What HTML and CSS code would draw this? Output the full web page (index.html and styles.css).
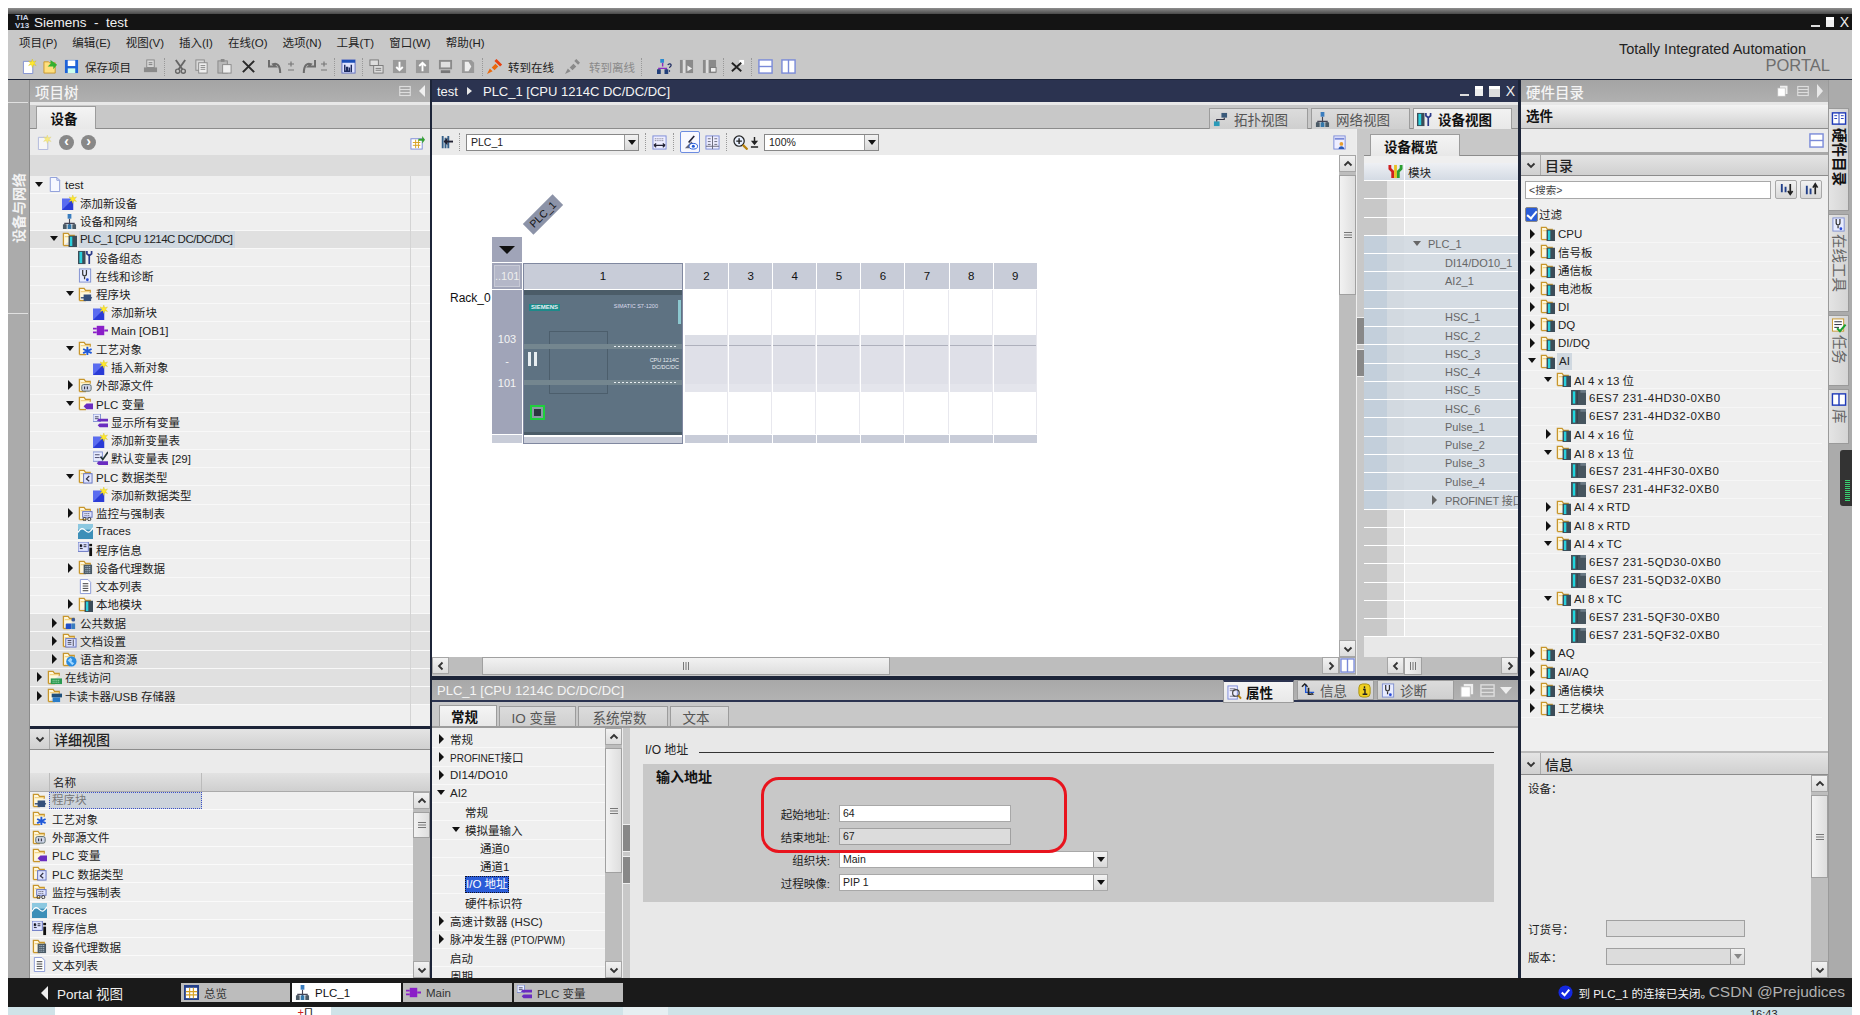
FILE: index.html
```html
<!DOCTYPE html>
<html lang="zh">
<head>
    <meta charset="UTF-8">
    <title>Siemens - test</title>
    <link rel="stylesheet" href="styles.css">
</head>
<body>
    <!-- shared icons -->
    <svg class="defs" xmlns="http://www.w3.org/2000/svg">
        <symbol id="fold" viewBox="0 0 16 16"><path d="M1.5 14.5V1.5h5l1.5 2h5v2.5" fill="#fff8dc" stroke="#c8962c" stroke-width="1.4"/><path d="M1.5 14.5h7" stroke="#c8962c" stroke-width="1.4"/><path d="M3 5h9" stroke="#eec76a"/></symbol>
        <symbol id="new" viewBox="0 0 16 16"><rect x="0" y="4" width="12" height="12" fill="#2a3bd6"/><path d="M0 16V4h12z" fill="#5a6cf0"/><path d="M11.5 0l1 3 3-1-2 2.500 2 2.500-3-1-1 3-1-3-3 1 2-2.500-2-2.500 3 1z" fill="#ffe92e" stroke="#c9b400" stroke-width=".3"/></symbol>
        <symbol id="net" viewBox="0 0 16 16"><path d="M8 5v5M3 14v-4h10v4M8 10v4" fill="none" stroke="#445" stroke-width="1.200"/><rect x="6" y="0" width="4" height="5" fill="#3a7dbf"/><rect x="1" y="11" width="4" height="5" fill="#4a5a66"/><rect x="6" y="11" width="4" height="5" fill="#37a"/><rect x="11" y="11" width="4" height="5" fill="#4a5a66"/></symbol>
        <symbol id="plc" viewBox="0 0 16 16"><use href="#fold"/><rect x="7" y="4" width="9" height="12" fill="#3c4c58"/><rect x="8.500" y="5" width="2.500" height="10" fill="#2ad0dc"/></symbol>
        <symbol id="cfg" viewBox="0 0 16 16"><rect x="0" y="1" width="8" height="14" fill="#3c4c58"/><rect x="1.500" y="2" width="3" height="12" fill="#2ad0dc"/><path d="M9.500 1v3l2.500 2 2.500-2V1M12 6v9" fill="none" stroke="#2a3a88" stroke-width="1.800"/></symbol>
        <symbol id="diag" viewBox="0 0 16 16"><rect x="1.500" y="1" width="12" height="14" fill="#e8ecff" stroke="#7f8fd0"/><path d="M5 2v4c0 3 4 3 4 0V2M7 9v3" fill="none" stroke="#333" stroke-width="1.300"/><circle cx="10" cy="12.500" r="1.500" fill="#2a4bd6"/></symbol>
        <symbol id="fb" viewBox="0 0 16 16"><use href="#fold"/><rect x="6" y="8" width="8" height="7" fill="#35507a"/><path d="M3 11.500h12" stroke="#35507a" stroke-width="1.500"/></symbol>
        <symbol id="ob" viewBox="0 0 16 16"><rect x="4" y="3" width="8" height="10" fill="#8a1ec8"/><path d="M0 6h4M0 10h4M12 8h4" stroke="#8a1ec8" stroke-width="2"/></symbol>
        <symbol id="tech" viewBox="0 0 16 16"><use href="#fold"/><path d="M10 6v9M5.500 8.500l9 4.500M5.500 13l9-4.500" stroke="#1f58d8" stroke-width="2"/></symbol>
        <symbol id="ext" viewBox="0 0 16 16"><use href="#fold"/><rect x="4" y="7" width="10" height="7" rx="2" fill="#cfd6e8" stroke="#566"/><path d="M7 9v3M10 9v3" stroke="#334" stroke-width="1.200"/></symbol>
        <symbol id="tag" viewBox="0 0 16 16"><use href="#fold"/><path d="M6 11l3-3h7v6H9z" fill="#6a2cc0"/></symbol>
        <symbol id="tags" viewBox="0 0 16 16"><rect x="0" y="0" width="8" height="8" fill="#e8ecff" stroke="#7f8fd0"/><path d="M2 3h4M2 5h4" stroke="#446"/><path d="M4 7l2-2h10v3H7zM5 12l2-2h9v4H7z" fill="#6a2cc0"/></symbol>
        <symbol id="deftag" viewBox="0 0 16 16"><rect x="0" y="1" width="10" height="10" fill="#e8ecff" stroke="#7f8fd0"/><path d="M2 4h5M2 7h5" stroke="#446"/><path d="M4 13l2-2h10v4H6z" fill="#6a2cc0"/><path d="M8 6l2.500 3L16 1" fill="none" stroke="#233" stroke-width="1.800"/></symbol>
        <symbol id="dtype" viewBox="0 0 16 16"><use href="#fold"/><rect x="6" y="5" width="9" height="10" fill="#dfe4ff" stroke="#6070c0"/><path d="M12 7.500l-3 3 3 2.500" fill="none" stroke="#334" stroke-width="1.300"/></symbol>
        <symbol id="watch" viewBox="0 0 16 16"><use href="#fold"/><rect x="5" y="6" width="10" height="6" fill="#dfe4ff" stroke="#6070c0"/><path d="M7 8h6M7 10h6" stroke="#445" stroke-dasharray="1 1"/><circle cx="7" cy="14" r="1.700" fill="none" stroke="#333"/><circle cx="12" cy="14" r="1.700" fill="none" stroke="#333"/></symbol>
        <symbol id="trace" viewBox="0 0 16 16"><rect width="16" height="16" fill="#3d8fb8"/><rect width="16" height="6" fill="#8cc8e0"/><path d="M0 9c3-5 5-5 8-2s5 2 8-3" fill="none" stroke="#fff" stroke-width="1.300"/></symbol>
        <symbol id="pinfo" viewBox="0 0 16 16"><rect x="0" y="0" width="11" height="10" fill="#dfe4ff" stroke="#6070c0"/><path d="M2 3h2v2H2M2 7h3M6 3h3M6 5h3" stroke="#223"/><rect x="12" y="6" width="3" height="9" fill="#111"/><rect x="12" y="2" width="3" height="2.500" fill="#111"/></symbol>
        <symbol id="proxy" viewBox="0 0 16 16"><use href="#fold"/><rect x="6" y="5" width="9" height="10" fill="#4a5a66"/><path d="M8 7h5M8 9h5M8 11h5M8 13h5" stroke="#cde" stroke-dasharray="1 1"/></symbol>
        <symbol id="txt" viewBox="0 0 16 16"><path d="M2.500.500h8l3 3v12h-11z" fill="#fff" stroke="#8a9ad8"/><path d="M5 5h6M5 7.500h6M5 10h6M5 12.500h6" stroke="#333"/></symbol>
        <symbol id="comm" viewBox="0 0 16 16"><use href="#fold"/><rect x="4" y="9" width="6" height="6" rx="1" fill="#2350c8"/><circle cx="12" cy="5" r="2" fill="#3a5a9a"/><path d="M10 15V9h4v6z" fill="#3a7dbf"/></symbol>
        <symbol id="docset" viewBox="0 0 16 16"><use href="#fold"/><rect x="4" y="6" width="11" height="9" fill="#dfe4ff" stroke="#6070c0"/><path d="M6 8h4M6 10h4M6 12h4M12 7v7" stroke="#445"/></symbol>
        <symbol id="lang" viewBox="0 0 16 16"><use href="#fold"/><circle cx="10" cy="10" r="5.500" fill="#2a8ce0"/><path d="M6 9l3-3 2 2-1 2 3 2-2 2-3-3z" fill="#9fd6ff"/></symbol>
        <symbol id="access" viewBox="0 0 16 16"><use href="#fold"/><rect x="4" y="9" width="12" height="6" fill="#2a9a50"/><path d="M6 11h8M6 13h8" stroke="#bfe8c8" stroke-dasharray="1 1"/></symbol>
        <symbol id="card" viewBox="0 0 16 16"><use href="#fold"/><rect x="5" y="6" width="11" height="4" fill="#20507a"/><rect x="6" y="10" width="8" height="5" fill="#2a7dc8"/></symbol>
        <symbol id="pdoc" viewBox="0 0 16 16"><path d="M3.500.500h7l3 3v12h-10z" fill="#f6f8ff" stroke="#8a9ad8"/><path d="M10.500.500v3h3" fill="none" stroke="#8a9ad8"/></symbol>
        <symbol id="mod" viewBox="0 0 16 16"><rect width="16" height="16" fill="#46555f"/><rect x="2" y="1.500" width="2.500" height="13" fill="#1fd8e0"/><rect x="6" y="1" width="1" height="14" fill="#2c3840"/><rect x="10" y="0" width="6" height="3" fill="#6a7a86"/></symbol>
        <symbol id="topo" viewBox="0 0 16 16"><rect x="1" y="10" width="6" height="5" fill="#2a9ab8"/><rect x="9" y="1" width="6" height="5" fill="#3a5a7a"/><path d="M4 10V8h8V6" fill="none" stroke="#334" stroke-width="1.200"/></symbol>
        <symbol id="save" viewBox="0 0 16 16"><path d="M1 1h14v14H1z" fill="#1e62d8"/><rect x="4" y="1.500" width="8" height="6" fill="#fff"/><rect x="4" y="10" width="8" height="5" fill="#cfe"/></symbol>
        <symbol id="tnew" viewBox="0 0 16 16"><path d="M1.500 2.500h10v13h-10z" fill="#fff" stroke="#7f8fd0"/><path d="M11 0l1 3 3-1-2 2.500 2 2.500-3-1-1 3-1-3-3 1 2-2.500-2-2.500 3 1z" fill="#ffe92e" stroke="#c9b400" stroke-width=".3"/></symbol>
        <symbol id="topen" viewBox="0 0 16 16"><path d="M1 15V3h5l1 1h6v11z" fill="#ffdf7e" stroke="#c8962c"/><path d="M8 5V1l7 5-4 5V8H5z" fill="#34b030"/></symbol>
        <symbol id="print" viewBox="0 0 16 16"><rect x="4" y="1" width="8" height="8" fill="#d8d8d8" stroke="#888"/><rect x="1" y="9" width="14" height="5" fill="#8a8a8a"/><path d="M6 4h4M6 6h4" stroke="#777"/></symbol>
        <symbol id="cut" viewBox="0 0 16 16"><path d="M3 1l7 10M13 1L6 11" stroke="#666" stroke-width="2" fill="none"/><circle cx="5" cy="13" r="2.200" fill="none" stroke="#666" stroke-width="1.500"/><circle cx="11" cy="13" r="2.200" fill="none" stroke="#666" stroke-width="1.500"/></symbol>
        <symbol id="copy" viewBox="0 0 16 16"><rect x="2" y="1" width="9" height="11" fill="#d8d8d8" stroke="#888"/><rect x="5" y="4" width="9" height="11" fill="#eee" stroke="#888"/><path d="M7 7h5M7 9h5M7 11h5" stroke="#888"/></symbol>
        <symbol id="paste" viewBox="0 0 16 16"><rect x="1" y="2" width="10" height="13" fill="#b8b8b8" stroke="#888"/><rect x="4" y="0" width="4" height="3" fill="#888"/><rect x="6" y="6" width="9" height="9" fill="#eee" stroke="#888"/></symbol>
        <symbol id="x" viewBox="0 0 16 16"><path d="M2 2l12 12M14 2L2 14" stroke="#2a2a2a" stroke-width="2.200"/></symbol>
        <symbol id="undo" viewBox="0 0 16 16"><path d="M1 1v7h7L5.500 5.500C9 4 13 6 13 15" fill="none" stroke="#6c6c6c" stroke-width="2.200"/></symbol>
        <symbol id="redo" viewBox="0 0 16 16"><path d="M15 1v7H8l2.500-2.500C7 4 3 6 3 15" fill="none" stroke="#6c6c6c" stroke-width="2.200"/></symbol>
        <symbol id="pm" viewBox="0 0 8 12"><path d="M1 3h6M4 .5v5M1 9h6" stroke="#777" stroke-width="1.200"/></symbol>
        <symbol id="compile" viewBox="0 0 16 16"><rect x="1" y="1" width="14" height="14" fill="#dfe4ff" stroke="#6070c0"/><rect x="1" y="1" width="14" height="3" fill="#1d4fb8"/><path d="M4 6v7h2V9h1v4h2V9M11 6v8" fill="none" stroke="#1d2b60" stroke-width="1.500"/></symbol>
        <symbol id="gray1" viewBox="0 0 16 16"><rect x="1" y="1" width="9" height="6" fill="#ddd" stroke="#777"/><rect x="5" y="7" width="10" height="8" fill="#ddd" stroke="#777"/><path d="M7 10h6M7 12h6" stroke="#777"/></symbol>
        <symbol id="gray2" viewBox="0 0 16 16"><rect x="1" y="1" width="14" height="14" fill="#9a9a9a"/><path d="M8 3v9M4.500 8.500L8 12l3.500-3.500" fill="none" stroke="#fff" stroke-width="2"/></symbol>
        <symbol id="gray3" viewBox="0 0 16 16"><rect x="1" y="1" width="14" height="14" fill="#9a9a9a"/><path d="M8 13V4M4.500 7.500L8 4l3.500 3.500" fill="none" stroke="#fff" stroke-width="2"/></symbol>
        <symbol id="gray4" viewBox="0 0 16 16"><rect x="1" y="1" width="14" height="10" fill="#8a8a8a"/><rect x="3" y="3" width="10" height="6" fill="#e0e0e0"/><rect x="3" y="12" width="10" height="3" fill="#777"/></symbol>
        <symbol id="gray5" viewBox="0 0 16 16"><path d="M1 1h10l3 3v11H1z" fill="#999"/><path d="M4 3h4l3 5-3 5H4z" fill="#eee"/></symbol>
        <symbol id="online" viewBox="0 0 16 16"><path d="M0 16l3-6 3 3zM5 9l4-4 3 3-4 4z" fill="#e86a10"/><path d="M9 1l6 6" stroke="#e84010" stroke-width="3"/></symbol>
        <symbol id="offline" viewBox="0 0 16 16"><path d="M0 16l3-6 3 3zM5 9l4-4 3 3-4 4z" fill="#8a8a8a"/><path d="M11 1l4 4" stroke="#8a8a8a" stroke-width="3"/></symbol>
        <symbol id="hier" viewBox="0 0 16 16"><path d="M6 4v4M2 14v-4h8v4" fill="none" stroke="#8a2cc0" stroke-width="1.500"/><rect x="3.500" y="0" width="4" height="4" fill="#2a8ad0"/><rect x="0" y="11" width="4" height="5" fill="#22407a"/><rect x="8" y="11" width="4" height="5" fill="#22407a"/><path d="M11.500 6.500c1-2 4-1.500 3.500.5-.3 1.200-1.500 1.200-1.700 2.500M13.300 12v1.500" fill="none" stroke="#1d2b60" stroke-width="1.300"/></symbol>
        <symbol id="gray6" viewBox="0 0 16 16"><rect x="1" y="1" width="14" height="14" fill="#8a8a8a"/><rect x="4" y="1" width="3" height="14" fill="#ddd"/><path d="M9 7l5 3-5 3z" fill="#eee"/></symbol>
        <symbol id="gray7" viewBox="0 0 16 16"><rect x="1" y="1" width="14" height="14" fill="#8a8a8a"/><rect x="4" y="1" width="3" height="14" fill="#ddd"/><rect x="9" y="9" width="6" height="5" fill="#eee" stroke="#777"/></symbol>
        <symbol id="crossx" viewBox="0 0 16 16"><rect x="10" y="1" width="5" height="5" fill="#fff"/><path d="M2 4l10 9M12 4L2 13" stroke="#222" stroke-width="2"/></symbol>
        <symbol id="hsplit" viewBox="0 0 16 16"><rect x="1" y="1" width="14" height="14" fill="#fff" stroke="#7a8ad8" stroke-width="1.500"/><path d="M1 8h14" stroke="#7a8ad8" stroke-width="1.500"/></symbol>
        <symbol id="vsplit" viewBox="0 0 16 16"><rect x="1" y="1" width="14" height="14" fill="#fff" stroke="#7a8ad8" stroke-width="1.500"/><path d="M8 1v14" stroke="#7a8ad8" stroke-width="1.500"/></symbol>
        <symbol id="grid" viewBox="0 0 16 16"><rect width="16" height="16" fill="#24408a"/><rect x="2" y="3" width="12" height="11" fill="#fff"/><path d="M2 7h12M2 10.500h12M6 3v11M10 3v11" stroke="#d6a020" stroke-width="1.200"/></symbol>
        <symbol id="upl" viewBox="0 0 16 16"><rect x="1" y="4" width="12" height="11" fill="#fff" stroke="#7a8ad8"/><path d="M3 8h8M3 11h8M6 5v9M9 5v9" stroke="#d6a020"/><path d="M9 4h4V1l3 4-3 4V6H9z" fill="#34a030"/></symbol>
        <symbol id="ddev" viewBox="0 0 16 16"><path d="M5 1v13M8 3v11M11 1v13" stroke="#35608a" stroke-width="2"/><path d="M16 7H7" stroke="#223" stroke-width="2"/><path d="M10 3L6 7l4 4z" fill="#223"/></symbol>
        <symbol id="rdoc" viewBox="0 0 16 16"><rect x="2" y="1" width="12" height="14" fill="#eef" stroke="#7a8ad8"/><rect x="3" y="3" width="10" height="2" fill="#7a8ad8"/><circle cx="10" cy="9.500" r="2" fill="#e8a030"/><path d="M7 15c0-4 6-4 6 0z" fill="#2a5ab8"/></symbol>
        <symbol id="zoom" viewBox="0 0 16 16"><circle cx="6.500" cy="6.500" r="5.500" fill="#e8f0ff" stroke="#222" stroke-width="1.300"/><path d="M6.500 3.500v6M3.500 6.500h6" stroke="#222" stroke-width="1.500"/><path d="M10.500 10.500l5 5" stroke="#b8820c" stroke-width="2.400"/></symbol>
        <symbol id="v1" viewBox="0 0 16 16"><rect x="1" y="1" width="14" height="14" fill="#eef" stroke="#7a8ad8"/><path d="M3 4h10M3 6h10" stroke="#667" stroke-dasharray="1 1"/><path d="M2 11h12M2 11l2.500-2M2 11l2.500 2M14 11l-2.500-2M14 11l-2.500 2" fill="none" stroke="#223" stroke-width="1.200"/></symbol>
        <symbol id="v2" viewBox="0 0 16 16"><path d="M2 14l7-7 1 1-1 6z" fill="#667"/><path d="M12 1L6 8" stroke="#223" stroke-width="1.800"/><ellipse cx="11" cy="12" rx="4.500" ry="3" fill="#fff" stroke="#1f58d8"/><circle cx="11" cy="12" r="1.600" fill="#1f58d8"/></symbol>
        <symbol id="v3" viewBox="0 0 16 16"><rect x="1" y="1" width="14" height="14" fill="#eef" stroke="#7a8ad8"/><path d="M8 1v14M3 4h3M10 4h3M3 7h3M10 7h3M3 10h3M10 10h3M1 12h14" stroke="#667"/></symbol>
        <symbol id="pload" viewBox="0 0 10 14"><path d="M1 5h8L5 10z" fill="#222"/><path d="M5 1v6M1 12h8" stroke="#222" stroke-width="1.600"/></symbol>
        <symbol id="wrench" viewBox="0 0 16 16"><path d="M2 1v4l3 3v7" fill="none" stroke="#d02020" stroke-width="3"/><path d="M8 1v14" stroke="#e8c020" stroke-width="3"/><path d="M14 1v4l-3 3v7" fill="none" stroke="#2ca030" stroke-width="3"/></symbol>
        <symbol id="sortd" viewBox="0 0 16 16"><path d="M2 2h2v9H2zM6 5h2v6H6z" fill="#22408a"/><path d="M12 2v10M9.500 9.500L12 13l2.500-3.500" fill="none" stroke="#222" stroke-width="1.800"/></symbol>
        <symbol id="sortu" viewBox="0 0 16 16"><path d="M2 4h2v9H2zM6 7h2v6H6z" fill="#22408a"/><path d="M12 13V3M9.500 6L12 2l2.500 4" fill="none" stroke="#222" stroke-width="1.800"/></symbol>
        <symbol id="insp" viewBox="0 0 16 16"><rect x="1" y="1" width="10" height="14" fill="#eef" stroke="#7a8ad8"/><path d="M3 4h6M3 6h6M3 12h6" stroke="#778"/><circle cx="9.500" cy="8.500" r="3.500" fill="none" stroke="#444" stroke-width="1.300"/><path d="M12 11l3 3.500" stroke="#b8820c" stroke-width="2"/></symbol>
        <symbol id="infoi" viewBox="0 0 16 16"><path d="M5 1v9h9" fill="none" stroke="#1f58d8" stroke-width="1.500"/><path d="M1 4l3-3 3 3" fill="none" stroke="#222" stroke-width="1.500"/><path d="M8 5v7h3" fill="none" stroke="#222" stroke-width="1.800"/><path d="M11 13v-3l3 2z" fill="#222"/></symbol>
        <symbol id="bullet" viewBox="0 0 16 16"><rect x="2" y="1" width="12" height="14" rx="4" fill="#f0d020" stroke="#a89010"/><path d="M8 3.500v2M6.500 7H8.500v5M6 12h5" fill="none" stroke="#222" stroke-width="1.500"/></symbol>
        <symbol id="win-lay" viewBox="0 0 16 16"><rect x="4" y="1" width="10" height="11" fill="#eee"/><rect x="1" y="4" width="10" height="11" fill="#fff" stroke="#bbb"/></symbol>
        <symbol id="win-list" viewBox="0 0 16 16"><rect x="1" y="2" width="14" height="12" fill="none" stroke="#ddd" stroke-width="1.500"/><path d="M1 6h14M1 10h14" stroke="#ddd" stroke-width="1.500"/></symbol>
        <symbol id="ok" viewBox="0 0 16 16"><circle cx="8" cy="8" r="7.500" fill="#1428e0"/><path d="M4 8l3 3 5-6" fill="none" stroke="#fff" stroke-width="2.200"/></symbol>
        <symbol id="book" viewBox="0 0 16 16"><rect x="1" y="2" width="14" height="12" fill="#fff" stroke="#1f3ab8" stroke-width="1.500"/><path d="M8 2v12" stroke="#1f3ab8" stroke-width="1.500"/></symbol>
        <symbol id="book2" viewBox="0 0 16 16"><rect x="1" y="2" width="14" height="12" fill="#fff" stroke="#1f3ab8" stroke-width="1.500"/><path d="M8 2v12M3 5h3M3 8h3M10 5h3M10 8h3" stroke="#1f3ab8"/></symbol>
        <symbol id="task" viewBox="0 0 16 16"><rect x="1" y="1" width="12" height="13" fill="#fff" stroke="#c8962c"/><path d="M3 4h8M3 7h8M3 10h5" stroke="#223"/><path d="M6 11l3 3 6-7" fill="none" stroke="#18a030" stroke-width="2.200"/></symbol>
        <symbol id="up" viewBox="0 0 10 10"><path d="M1.500 6.500L5 3l3.500 3.500" fill="none" stroke="#333" stroke-width="1.800"/></symbol>
        <symbol id="down" viewBox="0 0 10 10"><path d="M1.500 3.500L5 7l3.500-3.500" fill="none" stroke="#333" stroke-width="1.800"/></symbol>
        <symbol id="left" viewBox="0 0 10 10"><path d="M6.500 1.500L3 5l3.500 3.500" fill="none" stroke="#333" stroke-width="1.800"/></symbol>
        <symbol id="right" viewBox="0 0 10 10"><path d="M3.500 1.500L7 5 3.500 8.500" fill="none" stroke="#333" stroke-width="1.800"/></symbol>
        <symbol id="gripv" viewBox="0 0 10 10"><path d="M1 2.500h8M1 5h8M1 7.500h8" stroke="#777"/></symbol>
        <symbol id="griph" viewBox="0 0 10 10"><path d="M2.500 1v8M5 1v8M7.500 1v8" stroke="#777"/></symbol>
    </svg>

    <div class="window">
        <div class="titlebar">
            <span class="tia">TIA<br>V13</span>
            <span class="title-text">Siemens &nbsp;-&nbsp; test</span>
            <span class="win-btns"><i class="wb-min"></i><i class="wb-rest"></i><b>X</b></span>
        </div>

        <div class="mainbar">
            <div class="menus">
                <span>项目(P)</span><span>编辑(E)</span><span>视图(V)</span><span>插入(I)</span><span>在线(O)</span><span>选项(N)</span><span>工具(T)</span><span>窗口(W)</span><span>帮助(H)</span>
            </div>
            <div class="toolbar">
                <svg class="ti"><use href="#tnew"/></svg>
                <svg class="ti"><use href="#topen"/></svg>
                <svg class="ti"><use href="#save"/></svg>
                <span class="tb-text save-text">保存项目</span>
                <svg class="ti"><use href="#print"/></svg>
                <i class="sep"></i>
                <svg class="ti ml2"><use href="#cut"/></svg>
                <svg class="ti"><use href="#copy"/></svg>
                <svg class="ti ml2"><use href="#paste"/></svg>
                <svg class="ti ml3"><use href="#x"/></svg>
                <svg class="ti ml6"><use href="#undo"/></svg>
                <svg class="pm"><use href="#pm"/></svg>
                <svg class="ti"><use href="#redo"/></svg>
                <svg class="pm"><use href="#pm"/></svg>
                <i class="sep"></i>
                <svg class="ti"><use href="#compile"/></svg>
                <i class="sep"></i>
                <svg class="ti"><use href="#gray1"/></svg>
                <svg class="ti ml2"><use href="#gray2"/></svg>
                <svg class="ti ml2"><use href="#gray3"/></svg>
                <svg class="ti ml2"><use href="#gray4"/></svg>
                <svg class="ti ml2"><use href="#gray5"/></svg>
                <i class="sep"></i>
                <svg class="ti back2"><use href="#online"/></svg>
                <span class="tb-text on-text">转到在线</span>
                <svg class="ti"><use href="#offline"/></svg>
                <span class="tb-text off">转到离线</span>
                <i class="sep"></i>
                <svg class="ti ml9"><use href="#hier"/></svg>
                <svg class="ti ml1"><use href="#gray6"/></svg>
                <svg class="ti ml2"><use href="#gray7"/></svg>
                <i class="sep"></i>
                <svg class="ti"><use href="#crossx"/></svg>
                <i class="sep"></i>
                <svg class="ti"><use href="#hsplit"/></svg>
                <svg class="ti ml2"><use href="#vsplit"/></svg>
            </div>
            <div class="brand">
                <div class="brand-1">Totally Integrated Automation</div>
                <div class="brand-2">PORTAL</div>
            </div>
        </div>

        <div class="work">
            <div class="side-left">
                <div class="side-tab">设备与网络</div>
            </div>

            <div class="col-project">
                <div class="pane-head">
                    <span>项目树</span>
                    <span class="head-icons"><svg class="hi"><use href="#win-list"/></svg><i class="tri-l"></i></span>
                </div>
                <div class="tabrow"><div class="tab on">设备</div></div>
                <div class="subtools">
                    <svg class="ti dim"><use href="#tnew"/></svg>
                    <i class="round-btn">‹</i>
                    <i class="round-btn">›</i>
                    <svg class="ti push-r"><use href="#upl"/></svg>
                </div>
                <div class="grey-band"></div>
                <div class="tree">
                    <div class="row l0"><i class="tw o"></i><svg class="ic"><use href="#pdoc"/></svg><span>test</span></div>
                    <div class="row l1"><i class="tw"></i><svg class="ic"><use href="#new"/></svg><span>添加新设备</span></div>
                    <div class="row l1"><i class="tw"></i><svg class="ic"><use href="#net"/></svg><span>设备和网络</span></div>
                    <div class="row d l1"><i class="tw o"></i><svg class="ic"><use href="#plc"/></svg><span class="sel">PLC_1 [CPU 1214C DC/DC/DC]</span></div>
                    <div class="row l2"><i class="tw"></i><svg class="ic"><use href="#cfg"/></svg><span>设备组态</span></div>
                    <div class="row l2"><i class="tw"></i><svg class="ic"><use href="#diag"/></svg><span>在线和诊断</span></div>
                    <div class="row l2"><i class="tw o"></i><svg class="ic"><use href="#fb"/></svg><span>程序块</span></div>
                    <div class="row l3"><i class="tw"></i><svg class="ic"><use href="#new"/></svg><span>添加新块</span></div>
                    <div class="row l3"><i class="tw"></i><svg class="ic"><use href="#ob"/></svg><span>Main [OB1]</span></div>
                    <div class="row l2"><i class="tw o"></i><svg class="ic"><use href="#tech"/></svg><span>工艺对象</span></div>
                    <div class="row l3"><i class="tw"></i><svg class="ic"><use href="#new"/></svg><span>插入新对象</span></div>
                    <div class="row l2"><i class="tw c"></i><svg class="ic"><use href="#ext"/></svg><span>外部源文件</span></div>
                    <div class="row l2"><i class="tw o"></i><svg class="ic"><use href="#tag"/></svg><span>PLC 变量</span></div>
                    <div class="row l3"><i class="tw"></i><svg class="ic"><use href="#tags"/></svg><span>显示所有变量</span></div>
                    <div class="row l3"><i class="tw"></i><svg class="ic"><use href="#new"/></svg><span>添加新变量表</span></div>
                    <div class="row l3"><i class="tw"></i><svg class="ic"><use href="#deftag"/></svg><span>默认变量表 [29]</span></div>
                    <div class="row l2"><i class="tw o"></i><svg class="ic"><use href="#dtype"/></svg><span>PLC 数据类型</span></div>
                    <div class="row l3"><i class="tw"></i><svg class="ic"><use href="#new"/></svg><span>添加新数据类型</span></div>
                    <div class="row l2"><i class="tw c"></i><svg class="ic"><use href="#watch"/></svg><span>监控与强制表</span></div>
                    <div class="row l2"><i class="tw"></i><svg class="ic"><use href="#trace"/></svg><span>Traces</span></div>
                    <div class="row l2"><i class="tw"></i><svg class="ic"><use href="#pinfo"/></svg><span>程序信息</span></div>
                    <div class="row l2"><i class="tw c"></i><svg class="ic"><use href="#proxy"/></svg><span>设备代理数据</span></div>
                    <div class="row l2"><i class="tw"></i><svg class="ic"><use href="#txt"/></svg><span>文本列表</span></div>
                    <div class="row l2"><i class="tw c"></i><svg class="ic"><use href="#plc"/></svg><span>本地模块</span></div>
                    <div class="row d l1"><i class="tw c"></i><svg class="ic"><use href="#comm"/></svg><span>公共数据</span></div>
                    <div class="row d l1"><i class="tw c"></i><svg class="ic"><use href="#docset"/></svg><span>文档设置</span></div>
                    <div class="row d l1"><i class="tw c"></i><svg class="ic"><use href="#lang"/></svg><span>语言和资源</span></div>
                    <div class="row d l0"><i class="tw c"></i><svg class="ic"><use href="#access"/></svg><span>在线访问</span></div>
                    <div class="row d l0"><i class="tw c"></i><svg class="ic"><use href="#card"/></svg><span>卡读卡器/USB 存储器</span></div>
                </div>
                <div class="dark-h"></div>
                <div class="section-head">
                    <span class="collapse"><svg class="sb"><use href="#down"/></svg></span>
                    <span>详细视图</span>
                </div>
                <div class="detail-band"></div>
                <div class="detail-cols"><span class="dc-name">名称</span><span class="dc-rest"></span></div>
                <div class="detail-body">
                    <div class="detail-rows">
                        <div class="drow sel-row"><svg class="ic"><use href="#fb"/></svg><span>程序块</span></div>
                        <div class="drow"><svg class="ic"><use href="#tech"/></svg><span>工艺对象</span></div>
                        <div class="drow"><svg class="ic"><use href="#ext"/></svg><span>外部源文件</span></div>
                        <div class="drow"><svg class="ic"><use href="#tag"/></svg><span>PLC 变量</span></div>
                        <div class="drow"><svg class="ic"><use href="#dtype"/></svg><span>PLC 数据类型</span></div>
                        <div class="drow"><svg class="ic"><use href="#watch"/></svg><span>监控与强制表</span></div>
                        <div class="drow"><svg class="ic"><use href="#trace"/></svg><span>Traces</span></div>
                        <div class="drow"><svg class="ic"><use href="#pinfo"/></svg><span>程序信息</span></div>
                        <div class="drow"><svg class="ic"><use href="#proxy"/></svg><span>设备代理数据</span></div>
                        <div class="drow"><svg class="ic"><use href="#txt"/></svg><span>文本列表</span></div>
                    </div>
                    <div class="vsb">
                        <span class="sb-btn"><svg class="sb"><use href="#up"/></svg></span>
                        <span class="sb-thumb d-thumb"><svg class="sb"><use href="#gripv"/></svg></span>
                        <span class="sb-track"></span>
                        <span class="sb-btn"><svg class="sb"><use href="#down"/></svg></span>
                    </div>
                </div>
            </div>

            <div class="dark-v"></div>

            <div class="col-center">
                <div class="editor">
                    <div class="ed-head">
                        <span>test</span><i class="tri-r"></i><span>PLC_1 [CPU 1214C DC/DC/DC]</span>
                        <span class="win-btns"><i class="wb-min"></i><i class="wb-rest"></i><i class="wb-max"></i><b>X</b></span>
                    </div>
                    <div class="ed-tabs">
                        <div class="vtab"><svg class="ic"><use href="#topo"/></svg>拓扑视图</div>
                        <div class="vtab"><svg class="ic"><use href="#net"/></svg>网络视图</div>
                        <div class="vtab on"><svg class="ic"><use href="#cfg"/></svg>设备视图</div>
                    </div>
                    <div class="ed-body">
                        <div class="ed-main">
                            <div class="ed-tools">
                                <svg class="ti"><use href="#ddev"/></svg>
                                <i class="sep"></i>
                                <span class="combo w-plc"><span>PLC_1</span><i class="dd"></i></span>
                                <i class="sep"></i>
                                <svg class="ti"><use href="#v1"/></svg>
                                <i class="sep"></i>
                                <span class="toggled"><svg class="ti"><use href="#v2"/></svg></span>
                                <svg class="ti"><use href="#v3"/></svg>
                                <i class="sep"></i>
                                <svg class="ti"><use href="#zoom"/></svg>
                                <svg class="pl"><use href="#pload"/></svg>
                                <span class="combo w-zoom"><span>100%</span><i class="dd"></i></span>
                                <svg class="ti push-r"><use href="#rdoc"/></svg>
                            </div>
                            <div class="canvas-wrap">
                                <div class="canvas">
                                    <div class="rack-name">Rack_0</div>
                                    <div class="plc-flag">PLC_1</div>
                                    <div class="rack-toggle"><i></i></div>
                                    <div class="rack">
                                        <div class="rack-left">
                                            <div class="rl-head"><span>..101</span></div>
                                            <div class="rl-body"><span>103</span><span>-</span><span>101</span></div>
                                            <div class="rl-foot"></div>
                                        </div>
                                        <div class="slot cpu-slot">
                                            <div class="slot-h">1</div>
                                            <div class="cpu">
                                                <span class="cpu-logo">SIEMENS</span>
                                                <span class="cpu-name">SIMATIC S7-1200</span>
                                                <i class="cpu-led"></i>
                                                <i class="cpu-door"></i>
                                                <i class="cpu-strip s1"></i>
                                                <i class="cpu-strip s2"></i>
                                                <span class="cpu-leds"><i></i><i></i></span>
                                                <span class="cpu-type">CPU 1214C<br>DC/DC/DC</span>
                                                <span class="cpu-port"><i></i></span>
                                            </div>
                                            <div class="slot-f"></div>
                                        </div>
                                        <div class="slot"><div class="slot-h">2</div><div class="slot-b"></div><div class="slot-f"></div></div>
                                        <div class="slot"><div class="slot-h">3</div><div class="slot-b"></div><div class="slot-f"></div></div>
                                        <div class="slot"><div class="slot-h">4</div><div class="slot-b"></div><div class="slot-f"></div></div>
                                        <div class="slot"><div class="slot-h">5</div><div class="slot-b"></div><div class="slot-f"></div></div>
                                        <div class="slot"><div class="slot-h">6</div><div class="slot-b"></div><div class="slot-f"></div></div>
                                        <div class="slot"><div class="slot-h">7</div><div class="slot-b"></div><div class="slot-f"></div></div>
                                        <div class="slot"><div class="slot-h">8</div><div class="slot-b"></div><div class="slot-f"></div></div>
                                        <div class="slot"><div class="slot-h">9</div><div class="slot-b"></div><div class="slot-f"></div></div>
                                    </div>
                                </div>
                                <div class="vsb">
                                    <span class="sb-btn"><svg class="sb"><use href="#up"/></svg></span>
                                    <span class="sb-thumb canvas-thumb"><svg class="sb"><use href="#gripv"/></svg></span>
                                    <span class="sb-track"></span>
                                    <span class="sb-btn"><svg class="sb"><use href="#down"/></svg></span>
                                </div>
                            </div>
                            <div class="hsb">
                                <span class="sb-btn"><svg class="sb"><use href="#left"/></svg></span>
                                <span class="hsb-gap"></span>
                                <span class="sb-thumb h-thumb"><svg class="sb"><use href="#griph"/></svg></span>
                                <span class="sb-track"></span>
                                <span class="sb-btn"><svg class="sb"><use href="#right"/></svg></span>
                                <span class="sb-btn box"><svg class="ic"><use href="#vsplit"/></svg></span>
                            </div>
                        </div>
                        <div class="overview">
                            <div class="ov-strip"><i class="grab"></i><i class="grab"></i></div>
                            <div class="ov-main">
                                <div class="ov-tabrow"><div class="tab on">设备概览</div></div>
                                <div class="ov-head"><span class="c1"></span><span class="c2"><svg class="ic"><use href="#wrench"/></svg></span><span class="c3">模块</span></div>
                                <div class="ov-row"><span class="c1"></span><span class="c2"></span><span class="c3"></span></div>
                                <div class="ov-row"><span class="c1"></span><span class="c2"></span><span class="c3"></span></div>
                                <div class="ov-row"><span class="c1"></span><span class="c2"></span><span class="c3"></span></div>
                                <div class="ov-row hl"><span class="c1"></span><span class="c2"></span><span class="c3 i1"><i class="tw o mini"></i>PLC_1</span></div>
                                <div class="ov-row hl"><span class="c1"></span><span class="c2"></span><span class="c3 i2">DI14/DO10_1</span></div>
                                <div class="ov-row hl"><span class="c1"></span><span class="c2"></span><span class="c3 i2">AI2_1</span></div>
                                <div class="ov-row hl"><span class="c1"></span><span class="c2"></span><span class="c3"></span></div>
                                <div class="ov-row hl"><span class="c1"></span><span class="c2"></span><span class="c3 i2">HSC_1</span></div>
                                <div class="ov-row hl"><span class="c1"></span><span class="c2"></span><span class="c3 i2">HSC_2</span></div>
                                <div class="ov-row hl"><span class="c1"></span><span class="c2"></span><span class="c3 i2">HSC_3</span></div>
                                <div class="ov-row hl"><span class="c1"></span><span class="c2"></span><span class="c3 i2">HSC_4</span></div>
                                <div class="ov-row hl"><span class="c1"></span><span class="c2"></span><span class="c3 i2">HSC_5</span></div>
                                <div class="ov-row hl"><span class="c1"></span><span class="c2"></span><span class="c3 i2">HSC_6</span></div>
                                <div class="ov-row hl"><span class="c1"></span><span class="c2"></span><span class="c3 i2">Pulse_1</span></div>
                                <div class="ov-row hl"><span class="c1"></span><span class="c2"></span><span class="c3 i2">Pulse_2</span></div>
                                <div class="ov-row hl"><span class="c1"></span><span class="c2"></span><span class="c3 i2">Pulse_3</span></div>
                                <div class="ov-row hl"><span class="c1"></span><span class="c2"></span><span class="c3 i2">Pulse_4</span></div>
                                <div class="ov-row hl"><span class="c1"></span><span class="c2"></span><span class="c3 i1b"><i class="tw c mini"></i><span class="pn">PROFINET 接口</span></span></div>
                                <div class="ov-row"><span class="c1"></span><span class="c2"></span><span class="c3"></span></div>
                                <div class="ov-row"><span class="c1"></span><span class="c2"></span><span class="c3"></span></div>
                                <div class="ov-row"><span class="c1"></span><span class="c2"></span><span class="c3"></span></div>
                                <div class="ov-row"><span class="c1"></span><span class="c2"></span><span class="c3"></span></div>
                                <div class="ov-row"><span class="c1"></span><span class="c2"></span><span class="c3"></span></div>
                                <div class="ov-row"><span class="c1"></span><span class="c2"></span><span class="c3"></span></div>
                                <div class="ov-row"><span class="c1"></span><span class="c2"></span><span class="c3"></span></div>
                                <div class="ov-fill"></div>
                                <div class="ov-hsb">
                                    <span class="ov-hsb-l"></span>
                                    <span class="sb-btn"><svg class="sb"><use href="#left"/></svg></span>
                                    <span class="sb-thumb ov-thumb"><svg class="sb"><use href="#griph"/></svg></span>
                                    <span class="sb-track"></span>
                                    <span class="sb-btn"><svg class="sb"><use href="#right"/></svg></span>
                                </div>
                            </div>
                        </div>
                    </div>
                </div>

                <div class="dark-h thick"></div>

                <div class="inspector">
                    <div class="insp-head">
                        <span class="insp-title">PLC_1 [CPU 1214C DC/DC/DC]</span>
                        <div class="insp-tabs">
                            <div class="itab on"><svg class="ic"><use href="#insp"/></svg>属性</div>
                            <div class="itab"><svg class="ic"><use href="#infoi"/></svg>信息<svg class="ic end"><use href="#bullet"/></svg></div>
                            <div class="itab"><svg class="ic"><use href="#diag"/></svg>诊断</div>
                        </div>
                        <span class="insp-icons"><svg class="ic"><use href="#win-lay"/></svg><svg class="ic"><use href="#win-list"/></svg><i class="tri-d"></i></span>
                    </div>
                    <div class="tabrow insp-tabrow">
                        <div class="tab big on">常规</div>
                        <div class="tab big t2">IO 变量</div>
                        <div class="tab big t3">系统常数</div>
                        <div class="tab big t4">文本</div>
                    </div>
                    <div class="insp-body">
                        <div class="nav">
                            <div class="nrow n0"><i class="tw c"></i><span>常规</span></div>
                            <div class="nrow n0"><i class="tw c"></i><span><small>PROFINET</small>接口</span></div>
                            <div class="nrow n0"><i class="tw c"></i><span>DI14/DO10</span></div>
                            <div class="nrow n0"><i class="tw o"></i><span>AI2</span></div>
                            <div class="nrow n1"><i class="tw"></i><span>常规</span></div>
                            <div class="nrow n1"><i class="tw o"></i><span>模拟量输入</span></div>
                            <div class="nrow n2"><i class="tw"></i><span>通道0</span></div>
                            <div class="nrow n2"><i class="tw"></i><span>通道1</span></div>
                            <div class="nrow n1"><i class="tw"></i><span class="cur">I/O 地址</span></div>
                            <div class="nrow n1"><i class="tw"></i><span>硬件标识符</span></div>
                            <div class="nrow n0"><i class="tw c"></i><span>高速计数器 (HSC)</span></div>
                            <div class="nrow n0"><i class="tw c"></i><span>脉冲发生器 <small>(PTO/PWM)</small></span></div>
                            <div class="nrow n0"><i class="tw"></i><span>启动</span></div>
                            <div class="nrow n0"><i class="tw"></i><span>周期</span></div>
                        </div>
                        <div class="vsb">
                            <span class="sb-btn"><svg class="sb"><use href="#up"/></svg></span>
                            <span class="sb-thumb nav-thumb"><svg class="sb"><use href="#gripv"/></svg></span>
                            <span class="sb-track"></span>
                            <span class="sb-btn"><svg class="sb"><use href="#down"/></svg></span>
                        </div>
                        <div class="nav-strip"><i class="grab"></i><i class="grab"></i></div>
                        <div class="props">
                            <div class="props-title"><span>I/O 地址</span><i></i></div>
                            <div class="props-block">
                                <h3>输入地址</h3>
                                <div class="frow first"><label>起始地址:</label><span class="inp">64</span></div>
                                <div class="frow"><label>结束地址:</label><span class="inp ro">67</span></div>
                                <div class="frow"><label>组织块:</label><span class="inp wide sel-inp"><span>Main</span><i class="dd"></i></span></div>
                                <div class="frow"><label>过程映像:</label><span class="inp wide sel-inp"><span>PIP 1</span><i class="dd"></i></span></div>
                                <div class="red-mark"></div>
                            </div>
                        </div>
                    </div>
                </div>
            </div>

            <div class="dark-v wide"></div>

            <div class="col-catalog">
                <div class="pane-head">
                    <span>硬件目录</span>
                    <span class="head-icons"><svg class="hi"><use href="#win-lay"/></svg><svg class="hi"><use href="#win-list"/></svg><i class="tri-r big"></i></span>
                </div>
                <div class="cat-sub">选件</div>
                <div class="cat-tools"><svg class="ti"><use href="#hsplit"/></svg></div>
                <div class="cat-line"></div>
                <div class="section-head small-head">
                    <span class="collapse"><svg class="sb"><use href="#down"/></svg></span>
                    <span>目录</span>
                </div>
                <div class="cat-search">
                    <span class="search-box">&lt;搜索&gt;</span>
                    <span class="s-btn"><svg class="ic"><use href="#sortd"/></svg></span>
                    <span class="s-btn"><svg class="ic"><use href="#sortu"/></svg></span>
                </div>
                <div class="cat-filter"><i class="chk"></i><span>过滤</span></div>
                <div class="cat-tree">
                    <div class="row cl0"><i class="tw c"></i><svg class="ic"><use href="#plc"/></svg><span>CPU</span></div>
                    <div class="row cl0"><i class="tw c"></i><svg class="ic"><use href="#plc"/></svg><span>信号板</span></div>
                    <div class="row cl0"><i class="tw c"></i><svg class="ic"><use href="#plc"/></svg><span>通信板</span></div>
                    <div class="row cl0"><i class="tw c"></i><svg class="ic"><use href="#plc"/></svg><span>电池板</span></div>
                    <div class="row cl0"><i class="tw c"></i><svg class="ic"><use href="#plc"/></svg><span>DI</span></div>
                    <div class="row cl0"><i class="tw c"></i><svg class="ic"><use href="#plc"/></svg><span>DQ</span></div>
                    <div class="row cl0"><i class="tw c"></i><svg class="ic"><use href="#plc"/></svg><span>DI/DQ</span></div>
                    <div class="row cl0"><i class="tw o"></i><svg class="ic"><use href="#plc"/></svg><span class="sel tight">AI</span></div>
                    <div class="row cl1"><i class="tw o"></i><svg class="ic"><use href="#plc"/></svg><span>AI 4 x 13 位</span></div>
                    <div class="row cl2"><i class="tw"></i><svg class="ic"><use href="#mod"/></svg><span>6ES7 231-4HD30-0XB0</span></div>
                    <div class="row cl2"><i class="tw"></i><svg class="ic"><use href="#mod"/></svg><span>6ES7 231-4HD32-0XB0</span></div>
                    <div class="row cl1"><i class="tw c"></i><svg class="ic"><use href="#plc"/></svg><span>AI 4 x 16 位</span></div>
                    <div class="row cl1"><i class="tw o"></i><svg class="ic"><use href="#plc"/></svg><span>AI 8 x 13 位</span></div>
                    <div class="row cl2"><i class="tw"></i><svg class="ic"><use href="#mod"/></svg><span>6ES7 231-4HF30-0XB0</span></div>
                    <div class="row cl2"><i class="tw"></i><svg class="ic"><use href="#mod"/></svg><span>6ES7 231-4HF32-0XB0</span></div>
                    <div class="row cl1"><i class="tw c"></i><svg class="ic"><use href="#plc"/></svg><span>AI 4 x RTD</span></div>
                    <div class="row cl1"><i class="tw c"></i><svg class="ic"><use href="#plc"/></svg><span>AI 8 x RTD</span></div>
                    <div class="row cl1"><i class="tw o"></i><svg class="ic"><use href="#plc"/></svg><span>AI 4 x TC</span></div>
                    <div class="row cl2"><i class="tw"></i><svg class="ic"><use href="#mod"/></svg><span>6ES7 231-5QD30-0XB0</span></div>
                    <div class="row cl2"><i class="tw"></i><svg class="ic"><use href="#mod"/></svg><span>6ES7 231-5QD32-0XB0</span></div>
                    <div class="row cl1"><i class="tw o"></i><svg class="ic"><use href="#plc"/></svg><span>AI 8 x TC</span></div>
                    <div class="row cl2"><i class="tw"></i><svg class="ic"><use href="#mod"/></svg><span>6ES7 231-5QF30-0XB0</span></div>
                    <div class="row cl2"><i class="tw"></i><svg class="ic"><use href="#mod"/></svg><span>6ES7 231-5QF32-0XB0</span></div>
                    <div class="row cl0"><i class="tw c"></i><svg class="ic"><use href="#plc"/></svg><span>AQ</span></div>
                    <div class="row cl0"><i class="tw c"></i><svg class="ic"><use href="#plc"/></svg><span>AI/AQ</span></div>
                    <div class="row cl0"><i class="tw c"></i><svg class="ic"><use href="#plc"/></svg><span>通信模块</span></div>
                    <div class="row cl0"><i class="tw c"></i><svg class="ic"><use href="#plc"/></svg><span>工艺模块</span></div>
                </div>
                <div class="section-head small-head info-head">
                    <span class="collapse"><svg class="sb"><use href="#down"/></svg></span>
                    <span>信息</span>
                </div>
                <div class="info-body">
                    <div class="info-main">
                        <div class="info-dev">设备：</div>
                        <div class="info-f"><label>订货号：</label><span class="inp ro info-inp"></span></div>
                        <div class="info-f"><label>版本：</label><span class="inp ro info-inp sel-inp"><span></span><i class="dd off"></i></span></div>
                    </div>
                    <div class="vsb">
                        <span class="sb-btn"><svg class="sb"><use href="#up"/></svg></span>
                        <span class="sb-thumb info-thumb"><svg class="sb"><use href="#gripv"/></svg></span>
                        <span class="sb-track"></span>
                        <span class="sb-btn"><svg class="sb"><use href="#down"/></svg></span>
                    </div>
                </div>
            </div>

            <div class="side-right">
                <div class="rtab t-hw"><svg class="ic"><use href="#book2"/></svg><span class="on">硬件目录</span></div>
                <div class="rtab t-on"><svg class="ic"><use href="#diag"/></svg><span>在线工具</span></div>
                <div class="rtab t-task"><svg class="ic"><use href="#task"/></svg><span>任务</span></div>
                <div class="rtab t-lib"><svg class="ic"><use href="#book"/></svg><span>库</span></div>
                <div class="meter"><i></i></div>
            </div>
        </div>

        <div class="statusbar">
            <div class="portal"><i class="tri-l big"></i>Portal 视图</div>
            <div class="stab"><svg class="ic"><use href="#grid"/></svg>总览</div>
            <div class="stab on"><svg class="ic"><use href="#net"/></svg>PLC_1</div>
            <div class="stab"><svg class="ic"><use href="#ob"/></svg>Main</div>
            <div class="stab"><svg class="ic"><use href="#tags"/></svg>PLC 变量</div>
            <div class="status-msg"><svg class="ic"><use href="#ok"/></svg>到 PLC_1 的连接已关闭。</div>
            <div class="mark">CSDN @Prejudices</div>
        </div>
        <div class="desk">
            <div class="desk-white"><span class="desk-red">+</span><span class="desk-pipe">∏</span></div>
            <div class="desk-pale"></div>
            <div class="desk-clock">16:43</div>
        </div>
    </div>
</body>
</html>
```

FILE: styles.css
```css
* {
    box-sizing: border-box;
}
html, body {
    margin: 0;
    height: 100%;
    background-color: #fff;
    overflow: hidden;
}
body {
    font-family: "Liberation Sans", "Noto Sans CJK SC", sans-serif;
    font-size: 11.5px;
    color: #222;
    padding: 8px 8px 0 8px;
}
.defs {
    position: absolute;
    width: 0;
    height: 0;
}
i {
    font-style: normal;
}
small {
    font-size: 10px;
}
.window {
    width: 1844px;
    height: 1007px;
    display: flex;
    flex-direction: column;
    background-color: #c8c8c8;
}
.ic {
    width: 15px;
    height: 15px;
    flex: none;
}
.ti {
    width: 15px;
    height: 15px;
    flex: none;
}
.sb {
    width: 10px;
    height: 10px;
    display: block;
}
.dim {
    opacity: 0.55;
}
.push-r {
    margin-left: auto;
}
.ml1 { margin-left: 1px; }
.ml2 { margin-left: 2px; }
.ml3 { margin-left: 3px; }
.ml6 { margin-left: 6px; }
.ml9 { margin-left: 9px; }
.back2 { margin-left: -2px; }

/* title bar */
.titlebar {
    height: 22px;
    flex: none;
    display: flex;
    align-items: center;
    padding-top: 6px;
    background: linear-gradient(#8e8e8e 0, #4a4a4a 6px, #141414 6px, #141414 100%);
    color: #f0f0f0;
}
.tia {
    width: 16px;
    font-size: 8px;
    line-height: 8px;
    font-weight: bold;
    margin: 0 4px 0 6px;
    color: #c8d4e8;
    text-align: center;
}
.title-text {
    font-size: 13.5px;
}
.win-btns {
    margin-left: auto;
    display: flex;
    align-items: center;
    gap: 6px;
    padding-right: 3px;
    color: #eee;
}
.win-btns b {
    font-size: 14px;
    font-weight: normal;
}
.wb-min {
    width: 9px;
    height: 2px;
    background-color: #ddd;
    align-self: flex-end;
    margin-bottom: 3px;
}
.wb-rest {
    width: 8px;
    height: 10px;
    background-color: #eee;
    border-top: 3px solid #fff;
}
.wb-max {
    width: 11px;
    height: 11px;
    background-color: #ddd;
    border-top: 3px solid #fff;
}

/* menu + toolbar */
.mainbar {
    height: 49px;
    flex: none;
    position: relative;
    background-color: #c8c8c8;
    padding-left: 11px;
}
.menus {
    display: flex;
    gap: 15px;
    height: 24px;
    align-items: center;
    font-size: 11.5px;
}
.toolbar {
    display: flex;
    align-items: center;
    gap: 6px;
    height: 25px;
    padding-left: 3px;
    color: #222;
}
.tb-text {
    white-space: nowrap;
}
.save-text {
    margin-right: 6px;
}
.on-text {
    margin-right: 5px;
}
.tb-text.off {
    color: #8a8a8a;
    margin-left: 3px;
}
.pm {
    width: 8px;
    height: 12px;
    flex: none;
    margin-left: -2px;
}
.sep {
    width: 1px;
    height: 18px;
    flex: none;
    border-left: 1px dotted #999;
}
.brand {
    position: absolute;
    right: 22px;
    top: 12px;
    text-align: right;
}
.brand-1 {
    font-size: 14.5px;
    line-height: 15px;
    padding-right: 24px;
    color: #222;
}
.brand-2 {
    font-size: 16.5px;
    line-height: 16px;
    color: #6e6e6e;
}

/* work area */
.work {
    height: 899px;
    flex: none;
    display: flex;
    border-top: 1px solid #1c2438;
}
.side-left {
    width: 22px;
    flex: none;
    background-color: #ababab;
    border-right: 1px solid #8c8c8c;
}
.side-tab {
    margin-top: 22px;
    height: 212px;
    display: flex;
    align-items: center;
    justify-content: center;
    border-top: 1px solid #e0e0e0;
    border-bottom: 1px solid #e0e0e0;
    color: #f2f2f2;
    font-weight: bold;
    font-size: 14px;
    writing-mode: vertical-rl;
    text-orientation: sideways;
    transform: rotate(180deg);
}
.dark-v {
    width: 2px;
    flex: none;
    background-color: #1c2438;
}
.dark-v.wide {
    width: 3px;
}
.dark-h {
    height: 3px;
    flex: none;
    background-color: #1c2438;
}
.dark-h.thick {
    height: 4px;
    margin-top: 1px;
}
.col-project {
    width: 400px;
    flex: none;
    display: flex;
    flex-direction: column;
    background-color: #efefef;
}
.pane-head {
    height: 22px;
    flex: none;
    display: flex;
    align-items: center;
    justify-content: space-between;
    padding: 0 5px;
    background: linear-gradient(#a4a4a4, #b0b0b0);
    color: #f4f4f4;
    font-size: 14.5px;
    font-weight: 500;
}
.head-icons {
    display: flex;
    gap: 8px;
    align-items: center;
}
.hi {
    width: 12px;
    height: 12px;
}
.tri-l {
    width: 0;
    height: 0;
    border: 6px solid transparent;
    border-left-width: 0;
    border-right: 6px solid #f0f0f0;
}
.tri-r {
    display: inline-block;
    width: 0;
    height: 0;
    border: 4px solid transparent;
    border-right-width: 0;
    border-left: 5px solid #e8e8e8;
    margin: 0 11px 0 9px;
}
.tri-r.big {
    border-width: 7px 0 7px 6px;
    margin: 0;
}
.tri-l.big {
    border-width: 7px 7px 7px 0;
    margin-right: 9px;
}
.tri-d {
    width: 0;
    height: 0;
    border: 6px solid transparent;
    border-bottom-width: 0;
    border-top: 7px solid #eee;
}
.tabrow {
    height: 27px;
    flex: none;
    display: flex;
    align-items: flex-end;
    padding-left: 6px;
    background: linear-gradient(#e8e8e8 0, #e8e8e8 3px, #c8c8c8 3px);
    border-bottom: 1px solid #8c8c8c;
}
.tab {
    height: 23px;
    width: 60px;
    margin-bottom: -1px;
    display: flex;
    align-items: center;
    justify-content: center;
    border: 1px solid #9c9c9c;
    border-bottom: 0;
    background: linear-gradient(#dcdcdc, #cfcfcf);
    color: #555;
}
.tab.on {
    background: linear-gradient(#f4f4f4, #e8e8e8);
    color: #111;
    font-weight: bold;
    font-size: 13.5px;
    padding-right: 4px;
}
.subtools {
    height: 26px;
    flex: none;
    display: flex;
    align-items: center;
    gap: 7px;
    padding: 0 5px 0 7px;
    background-color: #ebebeb;
}
.round-btn {
    width: 15px;
    height: 15px;
    border-radius: 50%;
    background-color: #888;
    color: #fff;
    font-size: 14px;
    line-height: 12px;
    text-align: center;
    font-weight: bold;
}
.grey-band {
    height: 21px;
    flex: none;
    background-color: #dcdcdc;
}

/* tree rows */
.tree {
    flex: 1;
    min-height: 0;
    position: relative;
    background-color: #efefef;
}
.tree::after {
    content: "";
    position: absolute;
    top: 0;
    bottom: 0;
    left: 380px;
    width: 1px;
    background-color: #d4d4d4;
}
.row {
    height: 18.25px;
    display: flex;
    align-items: center;
    white-space: nowrap;
    background-color: #efefef;
    border-bottom: 1px solid #f8f8f8;
}
.row.d {
    background-color: #e0e0e0;
}
.row .ic {
    margin-right: 3px;
}
.tw {
    width: 12px;
    flex: none;
    height: 0;
    position: relative;
}
.tw.o::before {
    content: "";
    position: absolute;
    left: 0;
    top: -3px;
    border-left: 4.5px solid transparent;
    border-right: 4.5px solid transparent;
    border-top: 5px solid #111;
}
.tw.c::before {
    content: "";
    position: absolute;
    left: 2px;
    top: -5px;
    border-top: 5px solid transparent;
    border-bottom: 5px solid transparent;
    border-left: 5px solid #111;
}
.tw.mini.o::before {
    border-left-width: 4px;
    border-right-width: 4px;
    border-top-color: #666;
}
.tw.mini.c::before {
    border-left-color: #666;
}
.l0 { padding-left: 5px; }
.l1 { padding-left: 20px; }
.l2 { padding-left: 36px; }
.l3 { padding-left: 51px; }
.sel {
    background-color: #d0d8e0;
    padding: 0 2px 0 1px;
    margin-left: -1px;
    line-height: 17px;
    letter-spacing: -0.5px;
}
.sel.tight {
    padding: 0 2px;
    letter-spacing: 0;
}

/* detail view */
.section-head {
    height: 21px;
    flex: none;
    display: flex;
    align-items: center;
    background: linear-gradient(#e4e4e4, #d0d0d0);
    border-bottom: 1px solid #8c8c8c;
    font-size: 14px;
    font-weight: 500;
    color: #222;
}
.collapse {
    width: 20px;
    height: 100%;
    display: flex;
    align-items: center;
    justify-content: center;
    border-right: 1px solid #aaa;
    margin-right: 4px;
}
.detail-band {
    height: 23px;
    flex: none;
    background-color: #ebebeb;
}
.detail-cols {
    height: 19px;
    flex: none;
    display: flex;
    padding-left: 19px;
    background: linear-gradient(#e2e2e2, #cfcfcf);
    border-bottom: 1px solid #aaa;
    align-items: center;
}
.dc-name {
    width: 153px;
    padding-left: 3px;
    height: 100%;
    display: flex;
    align-items: center;
    border-left: 1px solid #bbb;
    border-right: 1px solid #bbb;
}
.detail-body {
    height: 186px;
    flex: none;
    display: flex;
    overflow: hidden;
}
.detail-rows {
    flex: 1;
    min-width: 0;
}
.drow {
    height: 18.25px;
    display: flex;
    align-items: center;
    white-space: nowrap;
    padding-left: 2px;
    border-bottom: 1px solid #fafafa;
}
.drow .ic {
    margin-right: 5px;
}
.sel-row span {
    width: 153px;
    margin-left: -3px;
    padding-left: 3px;
    line-height: 17px;
    background-color: #ccd3db;
    color: #777;
    outline: 1px dotted #3a50c8;
    outline-offset: -1px;
}

/* scrollbars */
.vsb {
    width: 17px;
    flex: none;
    display: flex;
    flex-direction: column;
    background-color: #bdbdbd;
}
.sb-btn {
    width: 17px;
    height: 17px;
    flex: none;
    display: flex;
    align-items: center;
    justify-content: center;
    background: linear-gradient(#f2f2f2, #dcdcdc);
    border: 1px solid #a6a6a6;
}
.sb-btn.box {
    background: #fff;
}
.sb-thumb {
    flex: none;
    display: flex;
    align-items: center;
    justify-content: center;
    border: 1px solid #a0a0a0;
    background: linear-gradient(90deg, #f2f2f2, #dedede);
}
.sb-track {
    flex: 1;
}
.vsb .sb-btn + .sb-thumb {
    margin-top: 3px;
}
.d-thumb {
    height: 26px;
}
.canvas-thumb {
    height: 120px;
}
.nav-thumb {
    height: 125px;
}
.info-thumb {
    height: 83px;
}

/* center */
.col-center {
    width: 1086px;
    flex: none;
    display: flex;
    flex-direction: column;
}
.editor {
    height: 595px;
    flex: none;
    display: flex;
    flex-direction: column;
    background-color: #c8c8c8;
}
.ed-head {
    height: 22px;
    flex: none;
    display: flex;
    align-items: center;
    padding-left: 5px;
    background-color: #2b3350;
    color: #f4f4f4;
    font-size: 13px;
}
.ed-tabs {
    height: 27px;
    flex: none;
    display: flex;
    justify-content: flex-end;
    align-items: flex-end;
    gap: 3px;
    padding-right: 6px;
    background: linear-gradient(#e8e8e8 0, #e8e8e8 3px, #c8c8c8 3px);
    border-bottom: 1px solid #8c8c8c;
}
.vtab {
    width: 99px;
    height: 21px;
    margin-bottom: -1px;
    display: flex;
    align-items: center;
    gap: 6px;
    padding-left: 3px;
    border: 1px solid #9c9c9c;
    border-bottom: 0;
    background: linear-gradient(#dcdcdc, #cfcfcf);
    color: #555;
    font-size: 13.5px;
}
.vtab.on {
    background: linear-gradient(#f2f2f2, #e8e8e8);
    color: #111;
    font-weight: bold;
}
.ed-body {
    flex: 1;
    display: flex;
    min-height: 0;
}
.ed-main {
    width: 924px;
    flex: none;
    display: flex;
    flex-direction: column;
}
.ed-tools {
    height: 26px;
    flex: none;
    display: flex;
    align-items: center;
    gap: 5px;
    padding: 0 9px 0 6px;
    background-color: #ebebeb;
}
.ed-tools .sep {
    margin: 0 1px;
}
.combo {
    height: 17px;
    display: flex;
    align-items: center;
    justify-content: space-between;
    background-color: #fff;
    border: 1px solid #888;
    padding-left: 4px;
    font-size: 10.5px;
}
.w-plc {
    width: 173px;
}
.w-zoom {
    width: 115px;
}
.dd {
    width: 14px;
    height: 100%;
    flex: none;
    display: flex;
    align-items: center;
    justify-content: center;
    background: linear-gradient(#f2f2f2, #d8d8d8);
    border-left: 1px solid #999;
}
.dd::before {
    content: "";
    border-left: 4px solid transparent;
    border-right: 4px solid transparent;
    border-top: 5px solid #111;
}
.dd.off::before {
    border-top-color: #888;
}
.toggled {
    width: 20px;
    height: 22px;
    display: flex;
    align-items: center;
    justify-content: center;
    border: 1px solid #6c8ce0;
    border-radius: 2px;
    background-color: #f8f8ff;
}
.pl {
    width: 9px;
    height: 13px;
    flex: none;
    margin: 0 0 0 -3px;
}
.canvas-wrap {
    flex: 1;
    display: flex;
    min-height: 0;
}
.canvas {
    flex: 1;
    position: relative;
    background-color: #fff;
    padding: 108px 0 0 60px;
}

/* rack */
.rack-name {
    position: absolute;
    left: 18px;
    top: 136px;
    font-size: 12px;
    color: #111;
}
.plc-flag {
    position: absolute;
    left: 90px;
    top: 52px;
    width: 42px;
    height: 15px;
    line-height: 15px;
    text-align: center;
    background-color: #8c93a8;
    font-size: 10.5px;
    color: #111;
    transform: rotate(-45deg);
}
.rack-toggle {
    position: absolute;
    left: 60px;
    top: 82px;
    width: 30px;
    height: 25px;
    display: flex;
    align-items: center;
    justify-content: center;
    background-color: #a0a4b8;
}
.rack-toggle i {
    border-left: 8px solid transparent;
    border-right: 8px solid transparent;
    border-top: 8px solid #111;
}
.rack {
    display: flex;
    align-items: flex-start;
}
.rack-left {
    width: 30px;
    margin-right: 1px;
    flex: none;
}
.rl-head {
    height: 26px;
    margin-bottom: 1px;
    padding: 2px;
    background-color: #a0a4b8;
}
.rl-head span {
    display: block;
    height: 22px;
    line-height: 20px;
    text-align: center;
    font-size: 11px;
    color: #eee;
    background-color: #b4b7c8;
    border: 1px solid #c8cad6;
}
.rl-body {
    height: 144px;
    background-color: #a0a4b8;
    color: #f4f4f4;
    font-size: 11px;
    display: flex;
    flex-direction: column;
    align-items: center;
    gap: 10px;
    padding-top: 43px;
}
.rl-foot {
    height: 8px;
    margin-top: 1px;
    background-color: #c8ccd8;
}
.slot {
    width: 44.1px;
    flex: none;
    padding-right: 1px;
}
.slot-h {
    height: 26px;
    line-height: 26px;
    text-align: center;
    background-color: #c8ccd8;
    color: #111;
    font-size: 11.5px;
    margin-bottom: 1px;
}
.slot-b {
    height: 144px;
    border-right: 1px solid #e8e8ee;
    background: linear-gradient(#fff 0, #fff 45px, #dcdee6 45px, #dcdee6 55px, #aeb0bc 55px, #aeb0bc 56px, #dfe0e8 56px, #dfe0e8 94px, #e4e5ec 94px, #e4e5ec 102px, #fff 102px);
}
.slot-f {
    height: 8px;
    margin-top: 1px;
    background-color: #c8ccd8;
}
.cpu-slot {
    width: 160px;
    padding-right: 0;
    margin-right: 2px;
    border: 1px solid #8088a0;
    background-color: #fff;
}
.cpu-slot .slot-h {
    height: 25px;
    line-height: 25px;
}
.cpu {
    position: relative;
    height: 145px;
    background-color: #5e7282;
    border-top: 5px solid #4b5c68;
    border-bottom: 3px solid #4b5c68;
    color: #e8eef2;
    overflow: hidden;
}
.cpu-slot .slot-f {
    margin-top: 2px;
    height: 6px;
}
.cpu-logo {
    position: absolute;
    left: 5px;
    top: 9px;
    font-size: 6px;
    line-height: 7px;
    font-weight: bold;
    padding: 0 2px;
    background-color: #1d8a8a;
}
.cpu-name {
    position: absolute;
    right: 24px;
    top: 8px;
    font-size: 5.5px;
    color: #dde;
}
.cpu-led {
    position: absolute;
    right: 1px;
    top: 5px;
    width: 3px;
    height: 24px;
    background-color: #8cc8d0;
}
.cpu-door {
    position: absolute;
    left: 25px;
    top: 36px;
    width: 59px;
    height: 63px;
    border: 1px solid #4c5e6c;
}
.cpu-strip {
    position: absolute;
    left: 0;
    right: 0;
    height: 5px;
    background-color: #74868f;
}
.cpu-strip::after {
    content: "";
    position: absolute;
    left: 90px;
    right: 6px;
    top: 2px;
    height: 1px;
    background: repeating-linear-gradient(90deg, #e8eef2 0, #e8eef2 2px, transparent 2px, transparent 4px);
}
.cpu-strip.s1 {
    top: 49px;
}
.cpu-strip.s2 {
    top: 85px;
}
.cpu-leds {
    position: absolute;
    left: 4px;
    top: 57px;
    display: flex;
    gap: 3px;
}
.cpu-leds i {
    width: 3px;
    height: 14px;
    background-color: #e8eef2;
}
.cpu-type {
    position: absolute;
    right: 3px;
    top: 62px;
    font-size: 5.5px;
    line-height: 7px;
    text-align: right;
}
.cpu-port {
    position: absolute;
    left: 6px;
    top: 110px;
    width: 15px;
    height: 15px;
    border: 2px solid #1ecf3c;
    background-color: #8a9aa4;
    padding: 2px;
}
.cpu-port i {
    display: block;
    width: 7px;
    height: 7px;
    background-color: #2c3840;
}

/* h scrollbar */
.hsb {
    height: 18px;
    flex: none;
    display: flex;
    background-color: #bdbdbd;
}
.hsb-gap {
    width: 33px;
    flex: none;
}
.h-thumb {
    width: 408px;
    background: linear-gradient(#f2f2f2, #dedede);
}

/* overview */
.overview {
    flex: 1;
    display: flex;
    min-width: 0;
    overflow: hidden;
}
.ov-strip {
    width: 8px;
    flex: none;
    display: flex;
    flex-direction: column;
    justify-content: center;
    gap: 4px;
    background-color: #c8c8c8;
    border-left: 1px solid #eee;
    padding-bottom: 110px;
}
.grab {
    height: 28px;
    border-top: 1px solid #eee;
    border-bottom: 1px solid #eee;
    background-color: #888;
}
.ov-main {
    flex: 1;
    min-width: 0;
    display: flex;
    flex-direction: column;
    background-color: #efefef;
    overflow: hidden;
    white-space: nowrap;
}
.ov-tabrow {
    height: 27px;
    flex: none;
    display: flex;
    align-items: flex-end;
    padding-left: 6px;
    background-color: #c8c8c8;
    border-bottom: 1px solid #8c8c8c;
}
.ov-tabrow .tab {
    width: 90px;
    height: 22px;
    padding-right: 8px;
}
.ov-head {
    height: 18px;
    margin-top: 7px;
    flex: none;
    display: flex;
    background: linear-gradient(#eef0f4, #d4dbe4);
}
.ov-row, .ov-head {
    border-bottom: 1px solid #fff;
}
.ov-row {
    height: 18.25px;
    flex: none;
    display: flex;
    color: #666;
    font-size: 11px;
}
.c1 {
    width: 23px;
    flex: none;
    background-color: #c8c8c8;
}
.c2 {
    width: 18px;
    flex: none;
    display: flex;
    align-items: center;
    justify-content: center;
    background-color: #e4e4e4;
    border-right: 1px solid #fff;
}
.c3 {
    flex: 1;
    min-width: 0;
    padding-left: 3px;
    display: flex;
    align-items: center;
    overflow: hidden;
    background-color: #ededed;
}
.ov-head .c1 {
    background-color: transparent;
}
.ov-head .c2 {
    background-color: transparent;
}
.ov-head .c3 {
    background-color: transparent;
    color: #222;
}
.hl .c1 {
    background-color: #c3cfdb;
}
.hl .c2 {
    background-color: #d2d9e0;
    border-right-color: #d5dce3;
}
.hl .c3 {
    background-color: #d5dce3;
}
.i1 {
    padding-left: 8px;
}
.i1 .tw {
    width: 15px;
}
.c3.i2 {
    padding-left: 40px;
}
.c3.i1b {
    padding-left: 25px;
}
.i1b .tw {
    width: 15px;
}
.pn {
    letter-spacing: -0.2px;
}
.ov-fill {
    flex: 1;
    background-color: #e8e8e8;
}
.ov-hsb {
    height: 18px;
    flex: none;
    display: flex;
    background-color: #bdbdbd;
}
.ov-hsb-l {
    width: 23px;
    flex: none;
    background-color: #c8c8c8;
}
.ov-thumb {
    width: 18px;
}

/* inspector */
.inspector {
    flex: 1;
    display: flex;
    flex-direction: column;
    min-height: 0;
    background-color: #e8e8e8;
}
.insp-head {
    height: 22px;
    flex: none;
    position: relative;
    display: flex;
    align-items: center;
    padding-left: 5px;
    background: linear-gradient(#a8a8a8, #b2b2b2);
    border-bottom: 2px solid #2b3350;
    color: #f4f4f4;
    font-size: 13px;
}
.insp-tabs {
    position: absolute;
    left: 791px;
    top: 0;
    display: flex;
    gap: 3px;
}
.itab {
    width: 77px;
    height: 20px;
    display: flex;
    align-items: center;
    gap: 4px;
    padding-left: 3px;
    background: linear-gradient(#dcdcdc, #cfcfcf);
    border: 1px solid #9c9c9c;
    color: #555;
    font-size: 13.5px;
}
.itab:first-child {
    width: 71px;
}
.itab.on {
    height: 23px;
    background: linear-gradient(#f4f4f4, #e8e8e8);
    color: #111;
    border-top: 2px solid #2b3350;
    font-weight: bold;
}
.itab .end {
    margin-left: auto;
    margin-right: 1px;
}
.insp-icons {
    position: absolute;
    right: 6px;
    top: 3px;
    display: flex;
    align-items: center;
    gap: 5px;
}
.insp-tabrow {
    height: 26px;
    background: #c8c8c8;
    border-bottom: 2px solid #9c9c9c;
    gap: 2px;
    padding-left: 7px;
    align-items: flex-end;
}
.tab.big {
    height: 20px;
    font-size: 13.5px;
    margin-bottom: 0;
    padding-right: 7px;
    background: linear-gradient(#dcdcdc, #cfcfcf);
}
.tab.big.on {
    width: 58px;
    background: linear-gradient(#f4f4f4, #e8e8e8);
    height: 21px;
}
.t2 { width: 77px; }
.t3 { width: 90px; }
.t4 { width: 59px; }
.insp-body {
    flex: 1;
    display: flex;
    min-height: 0;
}
.nav {
    width: 173px;
    flex: none;
    overflow: hidden;
    background-color: #efefef;
    padding-top: 2px;
}
.nrow {
    height: 18.25px;
    display: flex;
    align-items: center;
    white-space: nowrap;
    border-bottom: 1px solid #f8f8f8;
}
.nrow .tw {
    margin-right: 1px;
}
.n0 { padding-left: 5px; }
.n1 { padding-left: 20px; }
.n2 { padding-left: 35px; }
.cur {
    background-color: #2a5cd8;
    color: #fff;
    line-height: 17px;
    padding: 0 1px;
    outline: 1px dotted #112;
    outline-offset: -1px;
}
.nav-strip {
    width: 8px;
    flex: none;
    display: flex;
    flex-direction: column;
    gap: 4px;
    padding-top: 96px;
    background-color: #c8c8c8;
    border-left: 1px solid #eee;
}
.props {
    flex: 1;
    min-width: 0;
    padding: 10px 24px 0 13px;
    background-color: #e8e8e8;
}
.props-title {
    display: flex;
    align-items: center;
    gap: 11px;
    height: 20px;
    margin-left: 2px;
    font-size: 12px;
}
.props-title i {
    flex: 1;
    height: 1px;
    background-color: #333;
    margin-top: 9px;
}
.props-block {
    position: relative;
    height: 138px;
    margin-top: 6px;
    padding-top: 3px;
    background-color: #c8c8c8;
}
.props-block h3 {
    margin: 0 0 0 13px;
    font-size: 14px;
    line-height: 20px;
    font-weight: bold;
    color: #111;
}
.frow {
    display: flex;
    align-items: center;
    height: 17px;
    margin-top: 6px;
}
.frow.first {
    margin-top: 18px;
}
.frow label {
    width: 187px;
    text-align: right;
    margin-right: 9px;
}
.inp {
    width: 172px;
    height: 17px;
    line-height: 15px;
    padding-left: 3px;
    background-color: #fff;
    border: 1px solid #a8a8a8;
    font-size: 10.5px;
    color: #222;
}
.inp.ro {
    background-color: #dcdcdc;
    border-color: #a0a0a0;
}
.inp.wide {
    width: 269px;
}
.sel-inp {
    display: flex;
    justify-content: space-between;
    padding-right: 0;
}
.red-mark {
    position: absolute;
    left: 118px;
    top: 13px;
    width: 306px;
    height: 76px;
    border: 3.5px solid #e8141e;
    border-radius: 18px;
    pointer-events: none;
}

/* catalog */
.col-catalog {
    width: 308px;
    flex: none;
    display: flex;
    flex-direction: column;
    background-color: #efefef;
    border-right: 1px solid #9a9a9a;
}
.cat-sub {
    height: 27px;
    flex: none;
    display: flex;
    align-items: center;
    padding-left: 5px;
    background: linear-gradient(#e8e8e8 0, #e8e8e8 3px, #f4f4f4 3px, #d0d0d0 100%);
    border-bottom: 1px solid #8c8c8c;
    font-size: 13.5px;
    font-weight: bold;
    color: #111;
}
.cat-tools {
    height: 23px;
    flex: none;
    display: flex;
    align-items: center;
    justify-content: flex-end;
    padding-right: 4px;
    background-color: #ebebeb;
}
.cat-line {
    height: 3px;
    flex: none;
    background-color: #a8a8a8;
}
.small-head {
    height: 21px;
}
.cat-search {
    height: 27px;
    flex: none;
    display: flex;
    align-items: center;
    gap: 3px;
    padding-left: 4px;
}
.search-box {
    width: 246px;
    height: 18px;
    line-height: 16px;
    padding-left: 3px;
    background-color: #fff;
    border: 1px solid #a8a8a8;
    margin-right: 1px;
    font-size: 10.5px;
    color: #444;
}
.s-btn {
    width: 22px;
    height: 19px;
    display: flex;
    align-items: center;
    justify-content: center;
    background: linear-gradient(#f2f2f2, #d8d8d8);
    border: 1px solid #a8a8a8;
    border-radius: 2px;
}
.cat-filter {
    height: 22px;
    flex: none;
    display: flex;
    align-items: center;
    gap: 1px;
    padding-left: 4px;
}
.chk {
    width: 13px;
    height: 15px;
    background-color: #2a5cd8;
    border: 1px solid #888;
    border-radius: 2px;
    position: relative;
}
.chk::after {
    content: "";
    position: absolute;
    left: 3px;
    top: 1px;
    width: 4px;
    height: 8px;
    border: solid #fff;
    border-width: 0 2px 2px 0;
    transform: rotate(40deg);
}
.cat-tree {
    flex: 1;
    min-height: 0;
    padding-right: 6px;
    border-bottom: 2px solid #bbb;
}
.cl0 { padding-left: 7px; }
.cl1 { padding-left: 23px; }
.cl2 { padding-left: 38px; }
.cl2 span {
    letter-spacing: 0.5px;
}
.cat-tree .row {
    border-bottom-color: #f6f6f6;
}
.info-head {
    height: 22px;
    flex: none;
}
.info-body {
    height: 203px;
    flex: none;
    display: flex;
    background-color: #e8e8e8;
}
.info-main {
    flex: 1;
    padding: 5px 0 0 7px;
    display: flex;
    flex-direction: column;
}
.info-dev {
    flex: 1;
}
.info-f {
    display: flex;
    align-items: center;
    height: 17px;
    margin-bottom: 11px;
}
.info-f label {
    width: 78px;
    flex: none;
}
.info-inp {
    width: 139px;
}
.info-main .info-f:last-child {
    margin-bottom: 13px;
}

/* right strip */
.side-right {
    width: 23px;
    flex: none;
    position: relative;
    display: flex;
    flex-direction: column;
    gap: 3px;
    padding-top: 28px;
    background-color: #ababab;
}
.rtab {
    display: flex;
    flex-direction: column;
    align-items: center;
    gap: 2px;
    width: 20px;
    background: linear-gradient(90deg, #e4e4e4, #d4d4d4);
    border: 1px solid #9a9a9a;
    border-left: 0;
    padding-top: 2px;
    color: #666;
    font-size: 14.5px;
}
.rtab .ic {
    width: 16px;
    height: 15px;
}
.rtab span {
    writing-mode: vertical-rl;
    text-orientation: sideways;
    line-height: 16px;
}
.rtab span.on {
    color: #111;
    font-weight: bold;
}
.t-hw { height: 103px; }
.t-on { height: 98px; }
.t-task { height: 71px; }
.t-lib { height: 55px; }
.meter {
    position: absolute;
    right: 0;
    top: 370px;
    width: 12px;
    height: 56px;
    background-color: #333;
    border-radius: 3px 0 0 3px;
    padding: 30px 2px 4px 5px;
}
.meter i {
    display: block;
    height: 100%;
    background: repeating-linear-gradient(#38d070 0, #38d070 1px, #333 1px, #333 2px);
}

/* bottom bar */
.statusbar {
    height: 29px;
    flex: none;
    position: relative;
    display: flex;
    align-items: center;
    gap: 2px;
    background-color: #1a1a1a;
    color: #f0f0f0;
}
.portal {
    width: 171px;
    padding-left: 33px;
    display: flex;
    align-items: center;
    font-size: 13.5px;
}
.portal .tri-l {
    border-right-color: #eee;
}
.stab {
    width: 109px;
    height: 19px;
    display: flex;
    align-items: center;
    gap: 5px;
    padding-left: 3px;
    background-color: #bcbcbc;
    color: #333;
}
.stab.on {
    background-color: #fff;
    color: #111;
}
.status-msg {
    position: absolute;
    right: 140px;
    display: flex;
    align-items: center;
    gap: 5px;
    color: #f4f4f4;
}
.mark {
    position: absolute;
    right: 7px;
    top: 5px;
    font-size: 15.5px;
    color: #b0b0b0;
}
.desk {
    flex: 1;
    display: flex;
    position: relative;
    overflow: hidden;
    background-color: #cfe3e8;
    font-size: 11px;
}
.desk-white {
    width: 276px;
    margin-left: 47px;
    background-color: #fff;
    text-align: right;
    padding-right: 18px;
    line-height: 10px;
    white-space: nowrap;
}
.desk-red {
    color: #d02020;
}
.desk-pale {
    width: 45px;
    margin-left: 292px;
    background-color: #e6eff2;
}
.desk-clock {
    position: absolute;
    left: 1742px;
    top: 1px;
    line-height: 12px;
}
```
